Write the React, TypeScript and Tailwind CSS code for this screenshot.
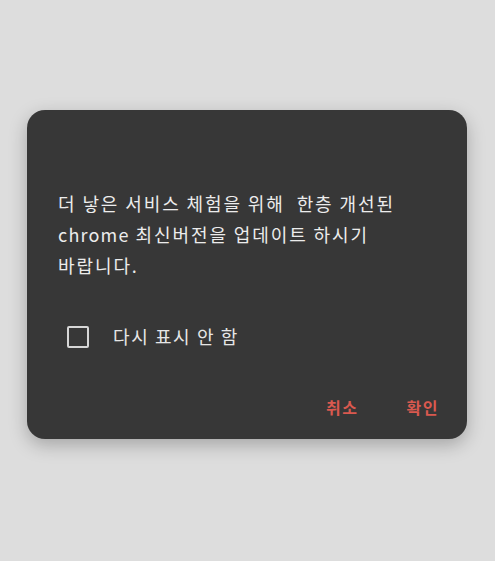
import React, { useState } from 'react';

const FONT = '"Noto Sans CJK KR", Roboto, "Noto Sans", sans-serif';

export default function App() {
  const [hide, setHide] = useState(false);

  return (
    <div className="w-[495px] h-[561px] bg-[#dddddd] pt-[110px] pl-[27px]" style={{ fontFamily: FONT }}>
      <div className="w-[440px] h-[329px] bg-[#373737] rounded-[18px] shadow-[0_6px_18px_rgba(0,0,0,0.25)] flex flex-col pl-[31px] pr-[20px]">
        <p className="mt-[78px] text-[18px] leading-[31px] text-[#ececec] tracking-[1.9px] whitespace-nowrap">
          더 낳은 서비스 체험을 위해&nbsp; 한층 개선된
          <br />
          <span className="tracking-[1.2px]">chrome</span> 최신버전을 업데이트 하시기
          <br />
          바랍니다.
        </p>

        <label className="mt-[42px] flex items-center pl-[9px] cursor-pointer">
          <button
            type="button"
            onClick={() => setHide(!hide)}
            className="w-[22px] h-[22px] border-2 border-[#d6d6d6] rounded-[2px] flex items-center justify-center"
          >
            {hide && (
              <svg width="16" height="16" viewBox="0 0 24 24" fill="none" stroke="#d6d6d6" strokeWidth="3"><path d="M5 12l5 5L20 7" /></svg>
            )}
          </button>
          <span className="ml-[24px] text-[18px] tracking-[1.6px] text-[#e6e6e6]">다시 표시 안 함</span>
        </label>

        <div className="mt-auto mb-[20px] flex justify-end gap-[48px] pr-[8px]">
          <button className="text-[16px] font-bold tracking-[1.5px] text-[#d9594f]">취소</button>
          <button className="text-[16px] font-bold tracking-[1.5px] text-[#d9594f]">확인</button>
        </div>
      </div>
    </div>
  );
}
